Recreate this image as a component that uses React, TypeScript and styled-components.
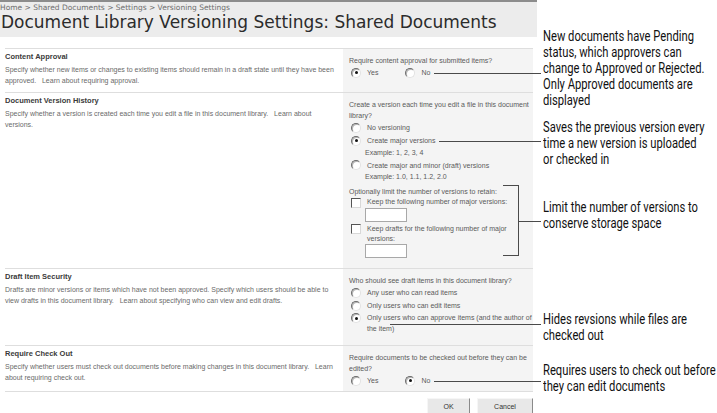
import React from "react";
import styled, { createGlobalStyle } from "styled-components";

const GlobalStyle = createGlobalStyle`
  html, body {
    margin: 0;
    padding: 0;
    background: #fff;
  }
`;

const Page = styled.div`
  position: relative;
  width: 717px;
  height: 413px;
  overflow: hidden;
  font-family: "Liberation Sans", Arial, sans-serif;
  color: #555;
`;

const Header = styled.div`
  width: 537px;
  height: 37px;
  box-sizing: border-box;
  background: #ececec;
  border-top: 2px solid #8c8c8c;
`;

const Breadcrumb = styled.div`
  font-family: "DejaVu Sans", Verdana, sans-serif;
  font-size: 7.5px;
  line-height: 9px;
  color: #6e6e6e;
  padding-top: 1px;
`;

const Title = styled.h1`
  margin: 0 0 0 1px;
  font-family: "DejaVu Sans", Verdana, sans-serif;
  font-weight: normal;
  font-size: 17px;
  line-height: 20px;
  color: #2b2b2b;
  white-space: nowrap;
`;

const Form = styled.div`
  margin: 11px 0 0 5px;
  width: 528px;
`;

const Row = styled.div<{ $h: number }>`
  display: grid;
  grid-template-columns: 338px 190px;
  height: ${(p) => p.$h}px;
  border-top: 1px solid #dedede;
`;

const Info = styled.div`
  padding: 3px 8px 0 0;
`;

const Heading = styled.div`
  font-weight: bold;
  font-size: 7.5px;
  line-height: 10px;
  color: #3a3a3a;
`;

const Desc = styled.div`
  margin-top: 2px;
  font-size: 7px;
  line-height: 11px;
  color: #6a6a6a;
`;

const Control = styled.div`
  background: #f4f4f4;
  padding: 6px 0 0 6px;
  font-size: 7px;
  line-height: 11px;
  color: #5a5a5a;
`;

const Option = styled.div<{ $h?: number; $grow?: boolean }>`
  display: flex;
  align-items: center;
  gap: 6px;
  height: ${(p) => p.$h ?? 13}px;
  padding-left: 2px;
  flex: ${(p) => (p.$grow ? 1 : "none")};
`;

const OptionPair = styled.div`
  display: flex;
  gap: 25px;
`;

/* callout line that starts after an option's label and runs out to the note */
const Leader = styled.span`
  flex: 1;
  height: 1px;
  margin: 1px -8px 0 -2px;
  background: #4a4a4a;
`;

const Radio = styled.span<{ $on?: boolean }>`
  position: relative;
  flex: none;
  width: 8px;
  height: 8px;
  border-radius: 50%;
  border: 1px solid;
  border-color: #6a6a6a #e2e2e2 #e2e2e2 #6a6a6a;
  background: #fff;
  box-shadow: inset 1px 1px 0 #b5b5b5;
  &::after {
    content: "";
    display: ${(p) => (p.$on ? "block" : "none")};
    position: absolute;
    left: 2.5px;
    top: 2.5px;
    width: 3px;
    height: 3px;
    border-radius: 50%;
    background: #111;
  }
`;

const Check = styled.span`
  flex: none;
  width: 8px;
  height: 8px;
  border: 1px solid;
  border-color: #555 #d8d8d8 #d8d8d8 #555;
  background: #fff;
`;

const Example = styled.div`
  padding-left: 16px;
  height: 12px;
  line-height: 12px;
`;

const Gap = styled.div<{ $h: number }>`
  height: ${(p) => p.$h}px;
`;

const WrapOption = styled.div<{ $lh?: number; $mt?: number }>`
  display: flex;
  align-items: flex-start;
  gap: 6px;
  padding-left: 2px;
  margin-top: ${(p) => p.$mt ?? 0}px;
  line-height: ${(p) => p.$lh ?? 11}px;
  & > span:first-child {
    margin-top: ${(p) => ((p.$lh ?? 11) - 10) / 2 + 0.5}px;
  }
`;

const TextBox = styled.div`
  width: 40px;
  height: 12px;
  margin-left: 16px;
  background: #fff;
  border: 1px solid #a8a8a8;
`;

const Buttons = styled.div`
  display: flex;
  justify-content: flex-end;
  gap: 7px;
  width: 528px;
  margin-left: 5px;
  padding-top: 6px;
  border-top: 1px solid #dedede;
  box-sizing: border-box;
`;

const Button = styled.div<{ $w: number }>`
  width: ${(p) => p.$w}px;
  height: 16px;
  box-sizing: border-box;
  display: flex;
  align-items: center;
  justify-content: center;
  font-size: 7px;
  color: #333;
  background: #e8e8e8;
  border: 1px solid;
  border-color: #f6f6f6 #8a8a8a #8a8a8a #f6f6f6;
`;

const Note = styled.div<{ $top: number }>`
  position: absolute;
  left: 543px;
  top: ${(p) => p.$top}px;
  font-family: Roboto, "Liberation Sans", sans-serif;
  font-size: 14px;
  line-height: 16px;
  color: #111;
  white-space: nowrap;
  transform: scaleX(0.8);
  transform-origin: left top;
`;

const Line = styled.div<{ $x: number; $y: number; $w?: number; $h?: number }>`
  position: absolute;
  left: ${(p) => p.$x}px;
  top: ${(p) => p.$y}px;
  width: ${(p) => p.$w ?? 1}px;
  height: ${(p) => p.$h ?? 1}px;
  background: #4a4a4a;
`;

export default function App() {
  return (
    <Page>
      <GlobalStyle />
      <Header>
        <Breadcrumb>Home &gt; Shared Documents &gt; Settings &gt; Versioning Settings</Breadcrumb>
        <Title>Document Library Versioning Settings: Shared Documents</Title>
      </Header>

      <Form>
        <Row $h={43}>
          <Info>
            <Heading>Content Approval</Heading>
            <Desc>
              Specify whether new items or changes to existing items should remain in a draft state until they have
              been approved.&nbsp;&nbsp; Learn about requiring approval.
            </Desc>
          </Info>
          <Control>
            <div>Require content approval for submitted items?</div>
            <OptionPair>
              <Option>
                <Radio $on />
                Yes
              </Option>
              <Option $grow>
                <Radio />
                No
                <Leader />
              </Option>
            </OptionPair>
          </Control>
        </Row>

        <Row $h={175}>
          <Info>
            <Heading>Document Version History</Heading>
            <Desc>
              Specify whether a version is created each time you edit a file in this document library.&nbsp;&nbsp; Learn about
              versions.
            </Desc>
          </Info>
          <Control>
            <div>Create a version each time you edit a file in this document library?</div>
            <Option>
              <Radio />
              No versioning
            </Option>
            <Option>
              <Radio $on />
              Create major versions
              <Leader />
            </Option>
            <Example>Example: 1, 2, 3, 4</Example>
            <Option $h={12}>
              <Radio />
              Create major and minor (draft) versions
            </Option>
            <Example>Example: 1.0, 1.1, 1.2, 2.0</Example>
            <Gap $h={3} />
            <div>Optionally limit the number of versions to retain:</div>
            <WrapOption $lh={10}>
              <Check />
              <span>Keep the following number of major versions:</span>
            </WrapOption>
            <TextBox />
            <WrapOption $lh={10} $mt={2}>
              <Check />
              <span>Keep drafts for the following number of major versions:</span>
            </WrapOption>
            <TextBox />
          </Control>
        </Row>

        <Row $h={76}>
          <Info>
            <Heading>Draft Item Security</Heading>
            <Desc>
              Drafts are minor versions or items which have not been approved. Specify which users should be able to
              view drafts in this document library.&nbsp;&nbsp; Learn about specifying who can view and edit drafts.
            </Desc>
          </Info>
          <Control>
            <div>Who should see draft items in this document library?</div>
            <Option>
              <Radio />
              Any user who can read items
            </Option>
            <Option>
              <Radio />
              Only users who can edit items
            </Option>
            <WrapOption>
              <Radio $on />
              <span>Only users who can approve items (and the author of the item)</span>
            </WrapOption>
          </Control>
        </Row>

        <Row $h={45}>
          <Info>
            <Heading>Require Check Out</Heading>
            <Desc>
              Specify whether users must check out documents before making changes in this document library.&nbsp;&nbsp; Learn
              about requiring check out.
            </Desc>
          </Info>
          <Control>
            <div>Require documents to be checked out before they can be edited?</div>
            <OptionPair>
              <Option>
                <Radio />
                Yes
              </Option>
              <Option $grow>
                <Radio $on />
                No
                <Leader />
              </Option>
            </OptionPair>
          </Control>
        </Row>
      </Form>

      <Buttons>
        <Button $w={43}>OK</Button>
        <Button $w={56}>Cancel</Button>
      </Buttons>

      <Note $top={28}>
        New documents have Pending
        <br />
        status, which approvers can
        <br />
        change to Approved or Rejected.
        <br />
        Only Approved documents are
        <br />
        displayed
      </Note>
      <Note $top={119}>
        Saves the previous version every
        <br />
        time a new version is uploaded
        <br />
        or checked in
      </Note>
      <Note $top={199}>
        Limit the number of versions to
        <br />
        conserve storage space
      </Note>
      <Note $top={311}>
        Hides revsions while files are
        <br />
        checked out
      </Note>
      <Note $top={362}>
        Requires users to check out before
        <br />
        they can edit documents
      </Note>

      {/* bracket round the version limits, and the line under the approvers option */}
      <Line $x={503} $y={185} $w={16} />
      <Line $x={518} $y={185} $h={71} />
      <Line $x={503} $y={255} $w={16} />
      <Line $x={518} $y={221} $w={23} />
      <Line $x={390} $y={324} $w={151} />
    </Page>
  );
}
